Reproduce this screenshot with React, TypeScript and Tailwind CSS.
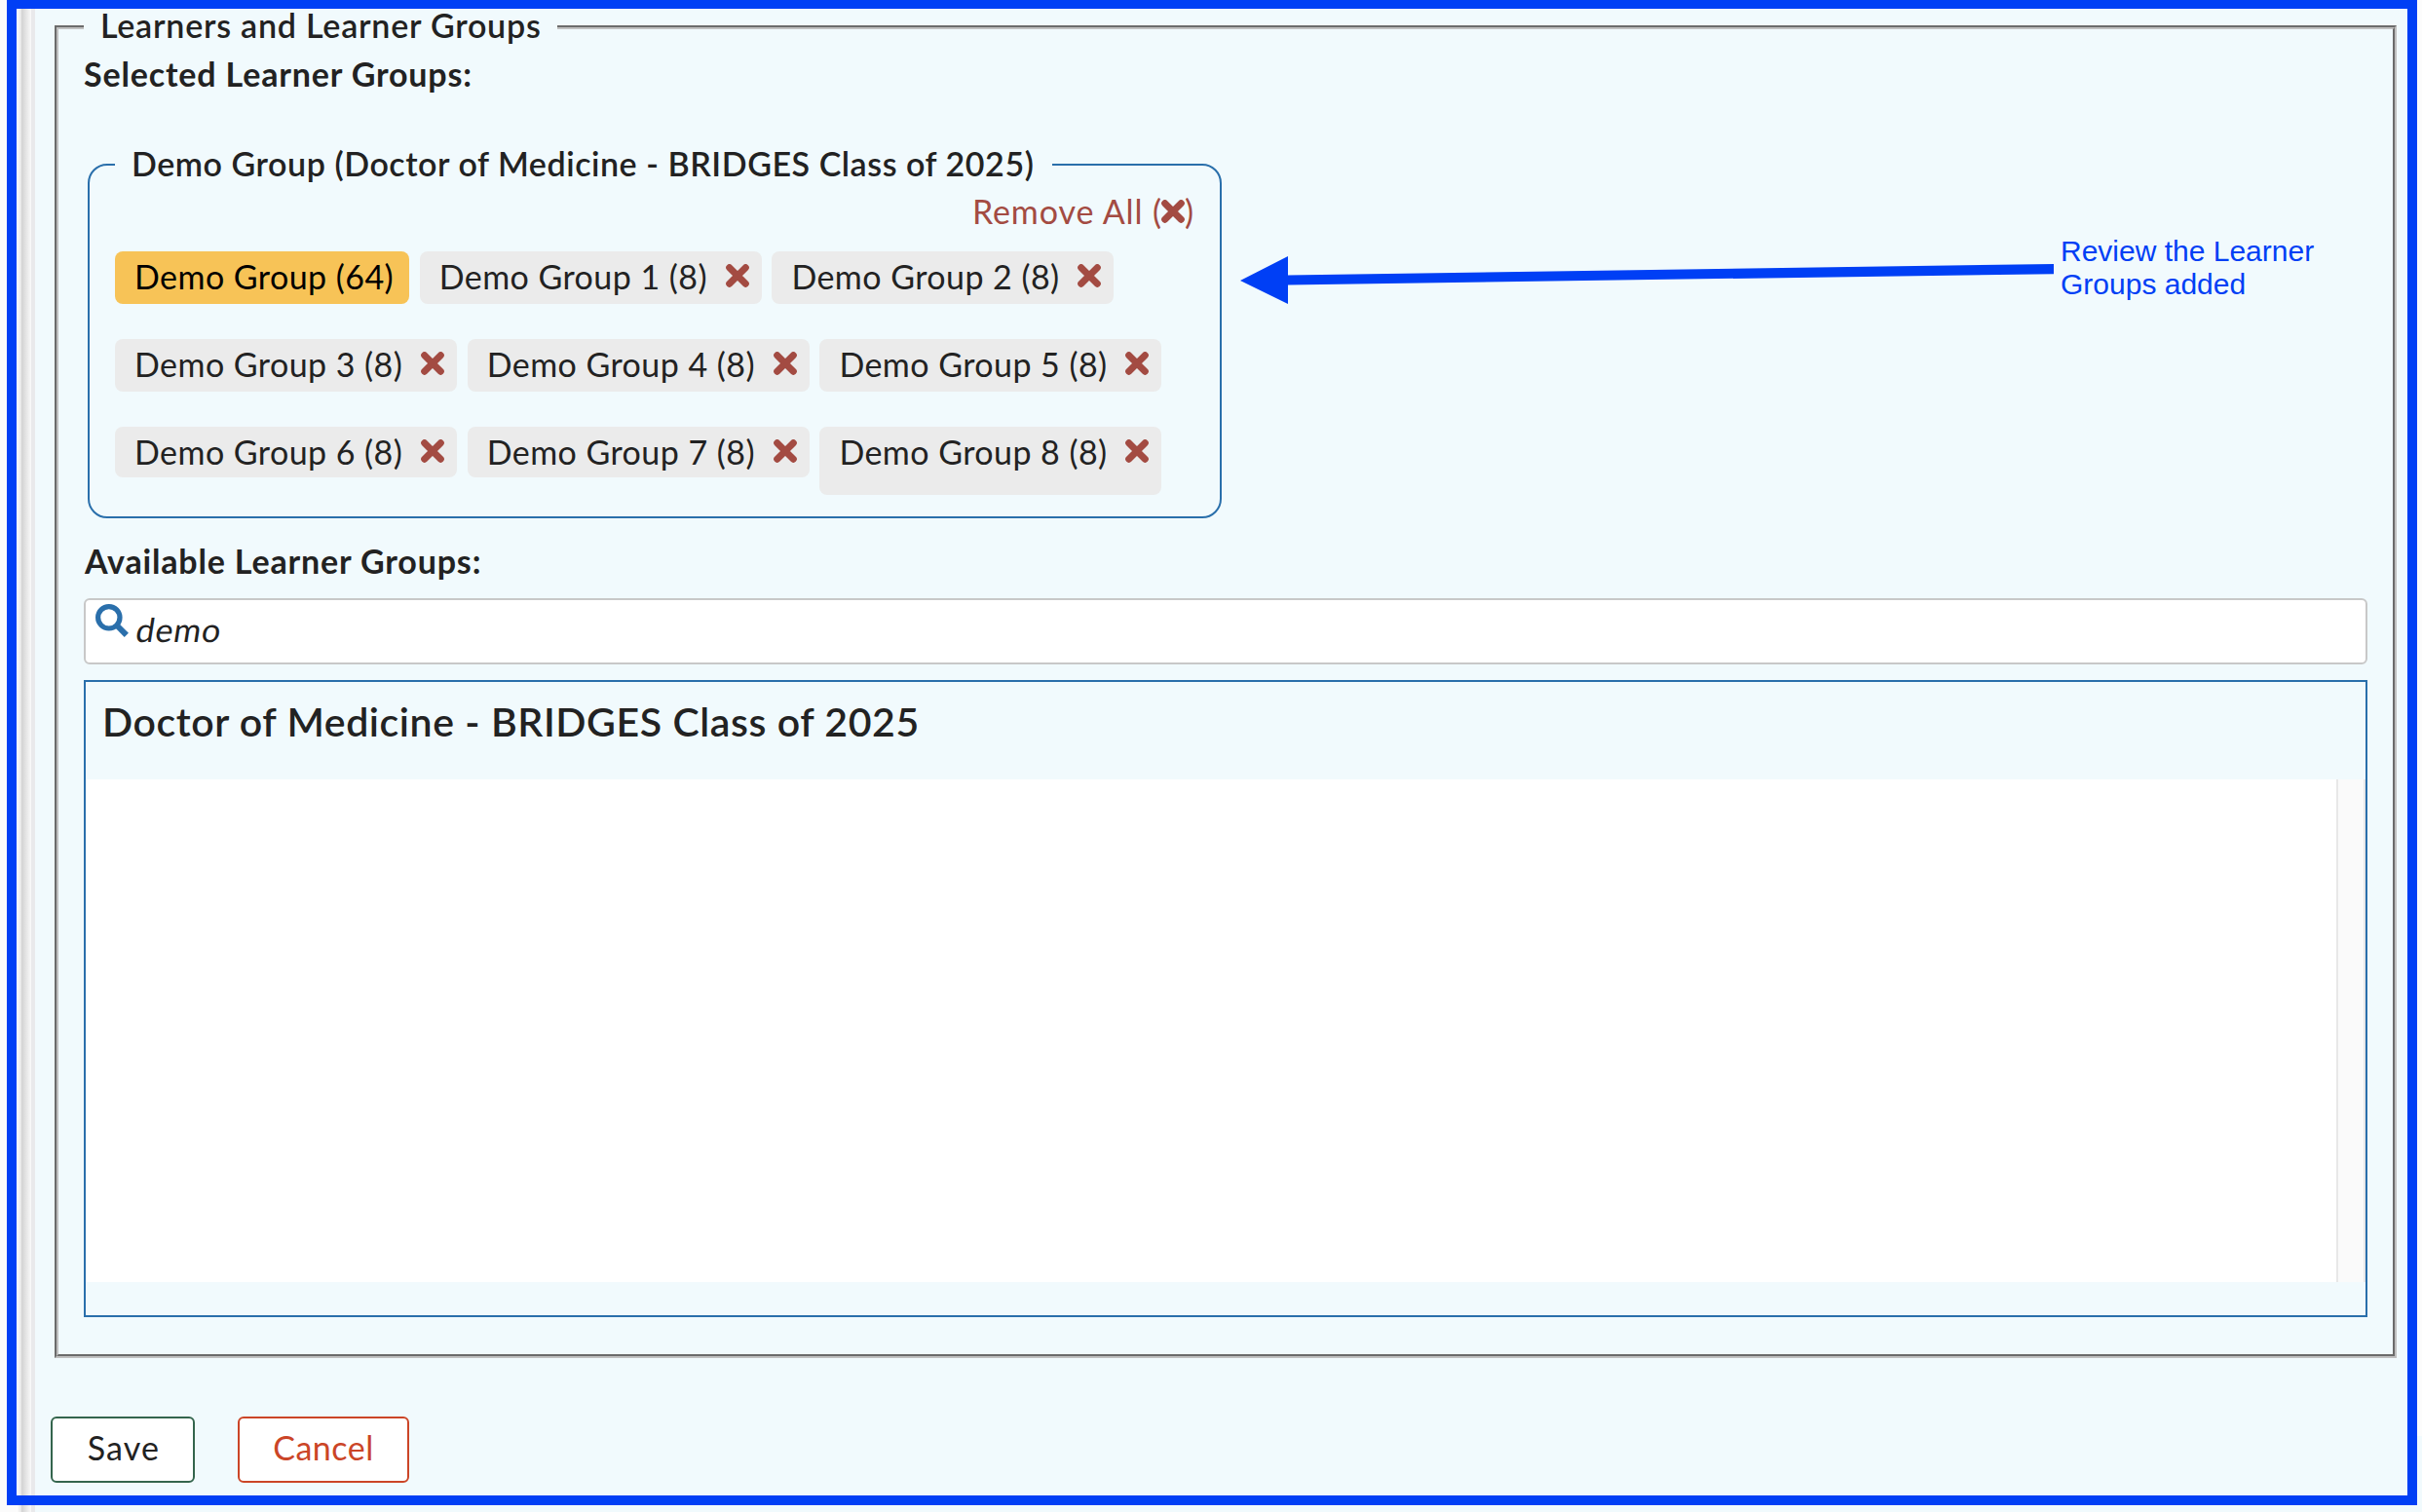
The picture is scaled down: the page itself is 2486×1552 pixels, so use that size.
import React from "react";

function Cross() {
  return (
    <svg viewBox="0 0 24 24" className="h-6 w-6 shrink-0 fill-none stroke-[#a34b42]" strokeWidth="7" strokeLinecap="round">
      <path d="M3.7 3.7 20.3 20.3M20.3 3.7 3.7 20.3" />
    </svg>
  );
}

function Chip({ label, tall, short }: { label: string; tall?: boolean; short?: boolean }) {
  const height = tall ? "h-[70px]" : short ? "h-[52px]" : "h-[54px]";
  return (
    <div className={`flex w-[351px] items-start rounded-lg bg-[#ebebeb] pl-5 pt-[6px] ${height}`}>
      <span className="w-[294px] whitespace-nowrap leading-[40px] tracking-[0.45px]">{label}</span>
      <span className="mt-[7px]">
        <Cross />
      </span>
    </div>
  );
}

export default function App() {
  return (
    <div className="relative flex h-[1552px] w-[2486px] overflow-hidden bg-[#f1fafd] font-['Lato',sans-serif] text-[34px] text-[#222]">
      {/* page gutter with the drop shadow of the side rail */}
      <div className="flex w-9 shrink-0">
        <div className="w-[17px] bg-[#fbfbfb]" />
        <div className="w-[5px] bg-linear-to-r from-white to-[#e6e6e6]" />
        <div className="w-[10px] bg-linear-to-r from-[#d2d2d2] to-[#fafafa]" />
        <div className="w-1 bg-[#e9e9eb]" />
      </div>

      <main className="flex-1 pl-5 pr-[26px] pt-[26px]">
        <section className="h-[1368px] border-2 border-b-[#c0c0c0] border-l-[#6b6b6b] border-r-[#c0c0c0] border-t-[#6b6b6b]">
          <div className="h-full border-2 border-b-[#6b6b6b] border-l-[#c0c0c0] border-r-[#6b6b6b] border-t-[#c0c0c0] px-[26px]">
            <h2 className="-mt-6 h-10 w-[486px] whitespace-nowrap bg-[#f1fafd] pl-[17px] font-semibold leading-[40px] tracking-[0.78px]">
              Learners and Learner Groups
            </h2>

            <h3 className="mt-[10px] h-10 font-bold leading-[40px] tracking-[0.84px]">Selected Learner Groups:</h3>

            <section className="ml-1 mt-[72px] h-[364px] w-[1164px] rounded-[20px] border-2 border-[#2a6fab] px-[26px]">
              <h4 className="-mt-[22px] h-10 w-[962px] whitespace-nowrap bg-[#f1fafd] pl-[17px] font-semibold leading-[40px] tracking-[0.55px]">
                Demo Group (Doctor of Medicine - BRIDGES Class of 2025)
              </h4>
              <div className="mt-[9px] flex h-10 justify-end leading-[40px] tracking-[0.9px] text-[#a34b42]">
                <span>Remove All (</span>
                <span className="-ml-[1px] mt-2">
                  <Cross />
                </span>
                <span>)</span>
              </div>
              <div className="mt-[21px] flex flex-col gap-9">
                <div className="flex gap-[10.7px]">
                  <div className="h-[54px] w-[302px] whitespace-nowrap rounded-lg bg-[#f7c357] pl-5 pt-[6px] leading-[40px] tracking-[0.45px] text-black">
                    Demo Group (64)
                  </div>
                  <Chip label="Demo Group 1 (8)" />
                  <Chip label="Demo Group 2 (8)" />
                </div>
                <div className="flex gap-[10.7px]">
                  <Chip label="Demo Group 3 (8)" />
                  <Chip label="Demo Group 4 (8)" />
                  <Chip label="Demo Group 5 (8)" />
                </div>
                <div className="flex items-start gap-[10.7px]">
                  <Chip label="Demo Group 6 (8)" short />
                  <Chip label="Demo Group 7 (8)" short />
                  <Chip label="Demo Group 8 (8)" tall />
                </div>
              </div>
            </section>

            <h3 className="mt-6 h-10 pl-px font-bold leading-[40px] tracking-[0.84px]">Available Learner Groups:</h3>

            <div className="mt-[18px] flex h-[68px] rounded-md border-2 border-[#c8c8c8] bg-white pl-[10px] pt-1">
              <svg viewBox="0 0 34 34" className="h-[34px] w-[34px] shrink-0 fill-none stroke-[#2a6fab]">
                <circle cx="13.8" cy="13.8" r="11.2" strokeWidth="5.2" />
                <path d="M22 22 31.8 31.8" strokeWidth="6" />
              </svg>
              <span className="ml-2 mt-[6px] h-10 -skew-x-[9deg] leading-[40px] tracking-[0.9px]">demo</span>
            </div>

            <section className="mt-4 h-[654px] border-2 border-[#2a6fab]">
              <h3 className="ml-[17px] mt-4 h-[50px] whitespace-nowrap text-[41px] font-semibold leading-[50px] tracking-[0.58px]">
                Doctor of Medicine - BRIDGES Class of 2025
              </h3>
              <div className="mt-[34px] flex h-[516px] bg-white">
                <div className="flex-1" />
                <div className="w-[30px] border-x-2 border-[#e8e8e8] bg-[#fafafa]" />
              </div>
            </section>
          </div>
        </section>

        <div className="-ml-1 mt-[60px] flex gap-11">
          <button className="h-[68px] w-[148px] rounded-md border-2 border-[#34654d] bg-white pb-[5px] pl-[2px] leading-[40px] tracking-[1.2px]">
            Save
          </button>
          <button className="h-[68px] w-[176px] rounded-md border-2 border-[#cb4527] bg-white pb-[5px] leading-[40px] tracking-[0.5px] text-[#cb4527]">
            Cancel
          </button>
        </div>
      </main>

      {/* annotation layer */}
      <div className="absolute right-0 top-0 h-[1474px] w-[5px] bg-[#fcfcfc]" />
      <div className="absolute bottom-[7px] left-[7px] right-[5px] top-[-1px] border-[10px] border-[#003ff5]" />
      <svg viewBox="0 0 840 60" className="absolute left-[1270px] top-[258px] h-[60px] w-[840px] fill-[#003ff5]">
        <path d="M3 30 52 5V24.6L838 13V23.2L52 34.4V54Z" />
      </svg>
      <p className="absolute left-[2115px] top-[241px] w-[280px] font-['Liberation_Sans',sans-serif] text-[30px] leading-[34px] text-[#003ff5]">
        Review the Learner
        <br />
        Groups added
      </p>
    </div>
  );
}
